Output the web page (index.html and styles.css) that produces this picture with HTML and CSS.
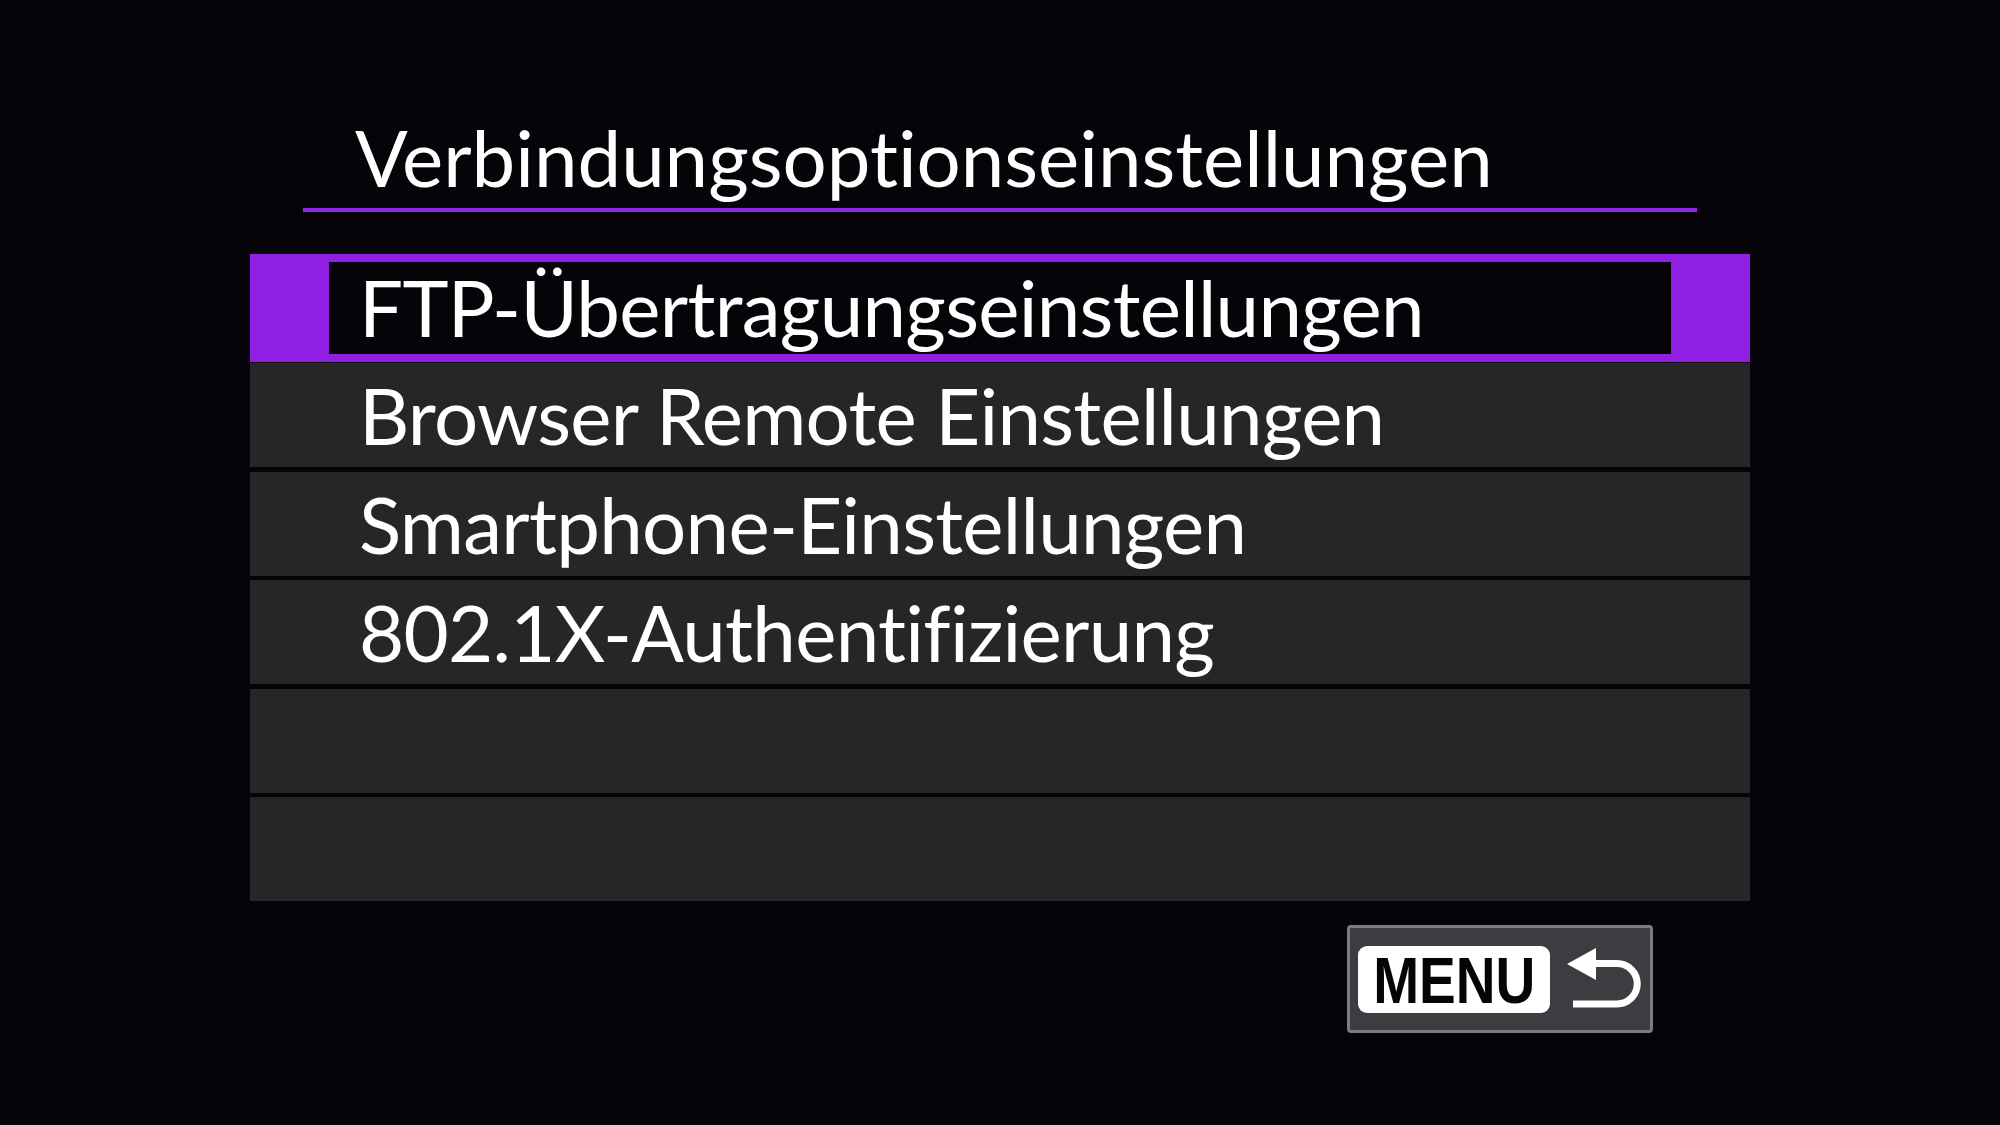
FILE: index.html
```html
<!DOCTYPE html>
<html lang="de">
<head>
  <meta charset="UTF-8">
  <title>Verbindungsoptionseinstellungen</title>
  <link rel="stylesheet" href="styles.css">
</head>
<body>
  <div class="screen">
    <div class="title">Verbindungsoptionseinstellungen</div>
    <div class="list">
      <div class="row selected"><div class="row-inner">FTP-Übertragungseinstellungen</div></div>
      <div class="row">Browser Remote Einstellungen</div>
      <div class="row">Smartphone-Einstellungen</div>
      <div class="row">802.1X-Authentifizierung</div>
      <div class="row"></div>
      <div class="row"></div>
    </div>
    <div class="footer">
      <div class="menu-btn">
        <span class="menu-label"><span class="menu-text">MENU</span></span>
        <!-- Zurück-Pfeil -->
        <svg class="back-icon" width="84" height="80" viewBox="0 0 84 80">
          <polygon points="7,25 36,9 36,41" fill="#fff"/>
          <path d="M34 24.5 H57 A20.25 20.25 0 0 1 57 65 H13" fill="none" stroke="#fff" stroke-width="7"/>
        </svg>
      </div>
    </div>
  </div>
</body>
</html>
```

FILE: styles.css
```css
body {
  margin: 0;
  background-color: #060409;
  color: #fff;
  font-family: Lato, "Noto Sans", sans-serif;
  font-variant-ligatures: none;
  width: 2000px;
  height: 1125px;
  overflow: hidden;
}
.screen {
  padding-top: 105px;
}
.title {
  margin-left: 303px;
  width: 1342px;
  padding-left: 52px;
  height: 103px;
  line-height: 104px;
  font-size: 78px;
  white-space: nowrap;
  border-bottom: 4px solid #9226e6;
}
.list {
  margin: 42px 0 0 250px;
  width: 1500px;
}
.row {
  height: 104px;
  margin-bottom: 4.5px;
  padding-left: 109px;
  background-color: #262528;
  font-size: 78px;
  letter-spacing: -0.7px;
  line-height: 104px;
  white-space: nowrap;
}
.row.selected {
  height: 92px;
  margin-bottom: 1px;
  padding: 8px 79px;
  background-color: #9020e2;
}
.row-inner {
  height: 92px;
  line-height: 90px;
  padding-left: 30px;
  background-color: #060409;
}
.footer {
  display: flex;
  justify-content: flex-end;
  width: 1403px;
  margin: 24px 0 0 250px;
}
.menu-btn {
  display: flex;
  align-items: center;
  gap: 10px;
  width: 292px;
  height: 102px;
  padding-left: 8px;
  background-color: #3d3c40;
  border: 3px solid #7c7b7f;
  border-radius: 4px;
}
.menu-label {
  flex-shrink: 0;
  width: 192px;
  height: 67px;
  line-height: 70px;
  text-align: center;
  background-color: #fff;
  color: #050505;
  border-radius: 9px;
  font-family: "Liberation Sans", Arial, sans-serif;
  font-weight: bold;
  font-size: 64px;
}
.menu-text {
  display: inline-block;
  transform: scaleX(0.86);
}
.back-icon {
  flex-shrink: 0;
}
```
